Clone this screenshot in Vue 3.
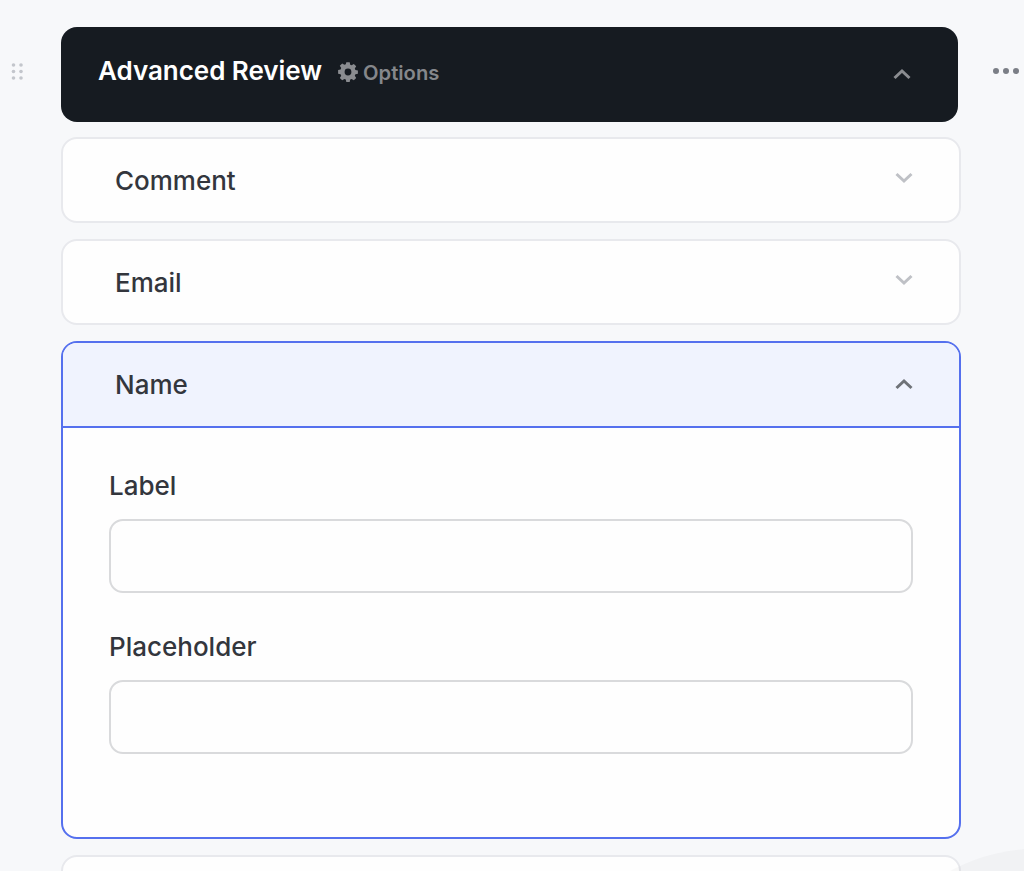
<script setup>
const collapsed = ['Comment', 'Email']
const fields = ['Label', 'Placeholder']
</script>

<template>
  <div class="page">
    <div class="handle">
      <svg width="14" height="20" viewBox="0 0 14 20">
        <g fill="#c3c6cc">
          <circle cx="2.5" cy="3" r="1.8" /><circle cx="10" cy="3" r="1.8" />
          <circle cx="2.5" cy="9.5" r="1.8" /><circle cx="10" cy="9.5" r="1.8" />
          <circle cx="2.5" cy="16" r="1.8" /><circle cx="10" cy="16" r="1.8" />
        </g>
      </svg>
    </div>

    <div class="stack">
      <header class="top">
        <h1>Advanced Review</h1>
        <span class="options">
          <svg width="20" height="20" viewBox="0 0 20 20">
            <path fill="#8a8c90" fill-rule="evenodd" d="M8.3 0.6h3.4l.5 2.5 1.4.6 2.2-1.4 2.4 2.4-1.4 2.2.6 1.4 2.5.5v3.4l-2.5.5-.6 1.4 1.4 2.2-2.4 2.4-2.2-1.4-1.4.6-.5 2.5H8.3l-.5-2.5-1.4-.6-2.2 1.4-2.4-2.4 1.4-2.2-.6-1.4-2.5-.5V8.3l2.5-.5.6-1.4-1.4-2.2 2.4-2.4 2.2 1.4 1.4-.6zM10 7a3.4 3.4 0 1 0 0 6.8A3.4 3.4 0 0 0 10 7z" transform="translate(0 -.4)" />
          </svg>
          Options
        </span>
        <svg class="chev" width="20" height="12" viewBox="0 0 20 12">
          <path d="M2.5 10 10 3l7.5 7" fill="none" stroke="#8b8d91" stroke-width="3" />
        </svg>
      </header>

      <section v-for="name in collapsed" :key="name" class="card">
        <div class="row">
          <span>{{ name }}</span>
          <svg class="chev down" width="20" height="12" viewBox="0 0 20 12">
            <path d="M2.5 2 10 9l7.5-7" fill="none" stroke="#bfc1c6" stroke-width="3" />
          </svg>
        </div>
      </section>

      <section class="card open">
        <div class="row active">
          <span>Name</span>
          <svg class="chev" width="20" height="12" viewBox="0 0 20 12">
            <path d="M2.5 10 10 3l7.5 7" fill="none" stroke="#6f7278" stroke-width="3" />
          </svg>
        </div>
        <div class="body">
          <div v-for="f in fields" :key="f" class="field">
            <label>{{ f }}</label>
            <div class="input"></div>
          </div>
        </div>
      </section>

      <section class="card stub"></section>
    </div>

    <div class="more">
      <i></i><i></i><i></i>
    </div>

    <div class="shade"></div>
  </div>
</template>

<style>
html, body { background: #f7f8fa; }
</style>

<style scoped>
.page {
  position: relative;
  height: 871px;
  overflow: hidden;
  display: flex;
  align-items: flex-start;
  background: #f7f8fa;
  font-family: Inter, "Liberation Sans", sans-serif;
  color: #33363d;
}
.handle { width: 61px; padding: 35px 0 0 11px; box-sizing: border-box; flex: none; line-height: 0; margin-top: 27px; }
.stack { width: 900px; flex: none; padding-top: 27px; display: flex; flex-direction: column; gap: 16px; }
.top {
  width: 897px; height: 95px; box-sizing: border-box; margin-bottom: -1px;
  background: #161b21; border-radius: 16px;
  display: flex; align-items: center;
  padding: 0 46px 7px 37px;
  color: #fff;
}
.top h1 { margin: 0; font-size: 26px; line-height: 30px; font-weight: 600; letter-spacing: -0.03px; }
.options { margin-left: 16px; margin-top: 3px; display: flex; align-items: center; gap: 5px; font-size: 20.2px; font-weight: 600; color: #85878b; }
.options svg { margin-top: -2px; }
.top .chev { margin-left: auto; margin-top: 6px; }
.card {
  background: #fefefe; border: 2px solid #e8e9ed; border-radius: 16px;
  box-sizing: border-box; overflow: hidden;
}
.row {
  height: 82px; box-sizing: border-box;
  display: flex; align-items: center; justify-content: space-between;
  padding: 0 45px 0 52px;
  font-size: 26px; font-weight: 500;
}
.row .down { margin-top: -5px; }
.open { border-color: #5570ee; height: 498px; }
.active { background: #f0f3fe; border-bottom: 2px solid #5570ee; height: 85px; }
.active .chev { margin-top: -1px; }
.body { padding: 43px 46px 0 46px; display: flex; flex-direction: column; gap: 39px; }
.field label { display: block; font-size: 26px; line-height: 30px; font-weight: 500; margin-bottom: 18px; }
.input { height: 74px; box-sizing: border-box; border: 2px solid #d9dadc; border-radius: 14px; background: #fefefe; }
.stub { height: 60px; }
.more { position: absolute; left: 993px; top: 68px; display: flex; gap: 4px; }
.more i { width: 6px; height: 6px; border-radius: 50%; background: #7b7e86; }
.shade {
  position: absolute; left: 915px; top: 848px; width: 220px; height: 120px;
  border-radius: 60% 0 0 0;
  background: rgba(90, 90, 100, 0.04);
  pointer-events: none;
}
</style>
